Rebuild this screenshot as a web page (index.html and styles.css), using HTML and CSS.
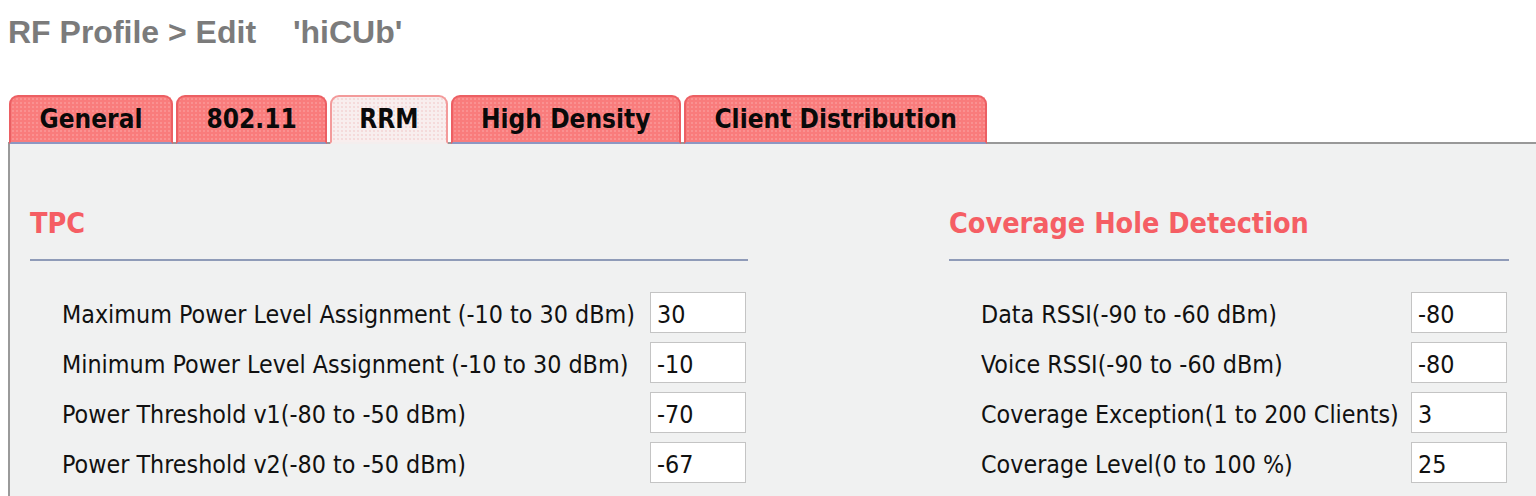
FILE: index.html
```html
<!DOCTYPE html>
<html lang="en">
<head>
    <meta charset="UTF-8">
    <title>RF Profile &gt; Edit</title>
    <link rel="stylesheet" href="styles.css">
</head>
<body>
    <h1 class="page-title">
        <span>RF Profile &gt; Edit</span>
        <span class="profile-name">'hiCUb'</span>
    </h1>

    <div class="tabs">
        <div class="tab">General</div>
        <div class="tab">802.11</div>
        <div class="tab active">RRM</div>
        <div class="tab">High Density</div>
        <div class="tab">Client Distribution</div>
    </div>

    <div class="panel">
        <div class="section tpc">
            <h2 class="section-title">TPC</h2>
            <div class="section-rule"></div>
            <div class="rows">
                <div class="row">
                    <label>Maximum Power Level Assignment (-10 to 30 dBm)</label>
                    <input type="text" value="30">
                </div>
                <div class="row">
                    <label>Minimum Power Level Assignment (-10 to 30 dBm)</label>
                    <input type="text" value="-10">
                </div>
                <div class="row">
                    <label>Power Threshold v1(-80 to -50 dBm)</label>
                    <input type="text" value="-70">
                </div>
                <div class="row">
                    <label>Power Threshold v2(-80 to -50 dBm)</label>
                    <input type="text" value="-67">
                </div>
            </div>
        </div>

        <div class="section chd">
            <h2 class="section-title">Coverage Hole Detection</h2>
            <div class="section-rule"></div>
            <div class="rows">
                <div class="row">
                    <label>Data RSSI(-90 to -60 dBm)</label>
                    <input type="text" value="-80">
                </div>
                <div class="row">
                    <label>Voice RSSI(-90 to -60 dBm)</label>
                    <input type="text" value="-80">
                </div>
                <div class="row">
                    <label>Coverage Exception(1 to 200 Clients)</label>
                    <input type="text" value="3">
                </div>
                <div class="row">
                    <label>Coverage Level(0 to 100 %)</label>
                    <input type="text" value="25">
                </div>
            </div>
        </div>
    </div>
</body>
</html>
```

FILE: styles.css
```css
* {
    margin: 0;
    padding: 0;
    box-sizing: border-box;
}

body {
    font-family: "DejaVu Sans Condensed", "DejaVu Sans", sans-serif;
    background: #fff;
    padding-left: 8px;
    overflow: hidden;
}

/* Page title */
.page-title {
    font-family: "Liberation Sans", Arial, sans-serif;
    font-size: 32px;
    line-height: 36px;
    font-weight: bold;
    color: #7b7b7b;
    margin-top: 14px;
}

.profile-name {
    margin-left: 28px;
}

/* Tabs */
.tabs {
    display: flex;
    gap: 3px;
    margin-top: 45px;
    padding-left: 1px;
    border-bottom: 2px solid #989898;
}

.tab {
    font-size: 26px;
    font-weight: bold;
    line-height: 45px;
    padding: 0 28.5px;
    color: #0a0a0a;
    background-color: #f97c7c;
    background-image: radial-gradient(rgba(255, 255, 255, 0.25) 0.6px, transparent 0.9px);
    background-size: 4px 4px;
    border: 2px solid #ec5f63;
    border-bottom: 2px solid #8d97c2;
    border-radius: 9px 9px 0 0;
    margin-bottom: -2px;
}

.tab.active {
    padding: 0 27px;
    background-color: #f8eeee;
    background-image: radial-gradient(rgba(230, 150, 150, 0.35) 0.6px, transparent 0.9px);
    border-color: #f39a9a;
    border-bottom-color: #f4eeee;
}

/* Panel */
.panel {
    display: flex;
    gap: 201px;
    background: #f0f1f1;
    border-left: 2px solid #9a9a9a;
    padding: 63px 0 13px 20px;
}

.section-title {
    font-size: 28.5px;
    line-height: 34px;
    font-weight: bold;
    color: #f55e64;
}

.section-rule {
    height: 2px;
    background: #8f9bb8;
    margin-top: 18px;
}

.tpc {
    width: 718px;
}

.chd {
    width: 560px;
}

.rows {
    display: flex;
    flex-direction: column;
    gap: 9px;
    margin-top: 31px;
    padding: 0 2px 0 32px;
}

.row {
    display: flex;
    align-items: center;
    justify-content: space-between;
    height: 41px;
}

.row label {
    font-size: 24.8px;
    color: #111;
    padding-top: 3px;
}

.row input {
    width: 96px;
    height: 41px;
    border: 1px solid #c4c4c4;
    background: #fff;
    font-family: "DejaVu Sans Condensed", "DejaVu Sans", sans-serif;
    font-size: 24.8px;
    color: #111;
    padding: 3px 0 0 6px;
    outline: none;
}
```
